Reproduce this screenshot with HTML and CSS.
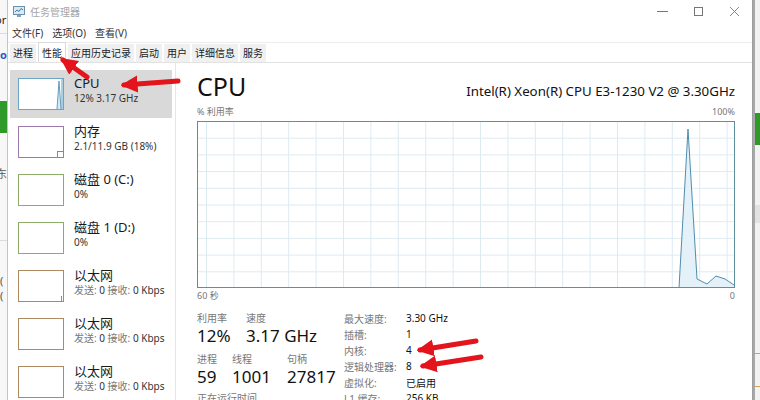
FILE: index.html
```html
<!DOCTYPE html>
<html>
<head>
    <title>任务管理器</title>
    <link rel="stylesheet" href="styles.css">
</head>
<body>
    <div class="desk">
        <div class="edge edge-left">
            <div class="frag frag-or">or</div>
            <div class="frag-line"></div>
            <div class="frag frag-blue">o</div>
            <div class="frag-green"></div>
            <div class="frag frag-gray">东</div>
            <div class="frag-line frag-line-low"></div>
            <div class="frag frag-paren">(</div>
            <div class="frag frag-paren2">(</div>
        </div>

        <div class="window">
            <div class="titlebar">
                <svg class="app-icon" width="12" height="11" viewBox="0 0 12 11">
                    <rect x="0.5" y="0.5" width="11" height="8" fill="#dbe9f3" stroke="#6d8fa8"/>
                    <polyline points="2,6 4,4 6,5.5 8,2.5 10,4" fill="none" stroke="#3d7fb0" stroke-width="1"/>
                    <rect x="4" y="9" width="4" height="2" fill="#8aa3b8"/>
                </svg>
                <span class="title">任务管理器</span>
                <div class="win-controls">
                    <div class="win-btn">
                        <svg width="11" height="11" viewBox="0 0 11 11"><line x1="0" y1="5.5" x2="11" y2="5.5" stroke="#777" stroke-width="1"/></svg>
                    </div>
                    <div class="win-btn">
                        <svg width="11" height="11" viewBox="0 0 11 11"><rect x="1.5" y="1.5" width="8" height="8" fill="none" stroke="#777" stroke-width="1"/></svg>
                    </div>
                    <div class="win-btn">
                        <svg width="11" height="11" viewBox="0 0 11 11"><path d="M1 1 L10 10 M10 1 L1 10" stroke="#888" stroke-width="1"/></svg>
                    </div>
                </div>
            </div>

            <div class="menubar">
                <span>文件(F)</span>
                <span>选项(O)</span>
                <span>查看(V)</span>
            </div>

            <div class="tabs">
                <span class="tab">进程</span>
                <span class="tab tab-active">性能</span>
                <span class="tab">应用历史记录</span>
                <span class="tab">启动</span>
                <span class="tab">用户</span>
                <span class="tab">详细信息</span>
                <span class="tab">服务</span>
            </div>

            <div class="content">
                <div class="sidebar">
                    <div class="res res-active">
                        <div class="thumb thumb-cpu">
                            <svg width="44" height="30" viewBox="0 0 44 30">
                                <polygon points="38,30 40,2 42,30" fill="#d6eaf5"/>
                                <polyline points="38,30 40,2 42,30" fill="none" stroke="#5d9dc0" stroke-width="1"/>
                                <line x1="43" y1="0" x2="43" y2="30" stroke="#5d9dc0" stroke-width="1"/>
                            </svg>
                        </div>
                        <div class="res-text">
                            <div class="res-name">CPU</div>
                            <div class="res-sub">12% 3.17 GHz</div>
                        </div>
                    </div>
                    <div class="res">
                        <div class="thumb thumb-mem"><span class="mem-fill"></span></div>
                        <div class="res-text">
                            <div class="res-name">内存</div>
                            <div class="res-sub">2.1/11.9 GB (18%)</div>
                        </div>
                    </div>
                    <div class="res">
                        <div class="thumb thumb-disk"></div>
                        <div class="res-text">
                            <div class="res-name">磁盘 0 (C:)</div>
                            <div class="res-sub">0%</div>
                        </div>
                    </div>
                    <div class="res">
                        <div class="thumb thumb-disk"></div>
                        <div class="res-text">
                            <div class="res-name">磁盘 1 (D:)</div>
                            <div class="res-sub">0%</div>
                        </div>
                    </div>
                    <div class="res">
                        <div class="thumb thumb-net"><span class="net-tick"></span></div>
                        <div class="res-text">
                            <div class="res-name">以太网</div>
                            <div class="res-sub"><span class="muted">发送:</span> 0 <span class="muted">接收:</span> 0 Kbps</div>
                        </div>
                    </div>
                    <div class="res">
                        <div class="thumb thumb-net"></div>
                        <div class="res-text">
                            <div class="res-name">以太网</div>
                            <div class="res-sub"><span class="muted">发送:</span> 0 <span class="muted">接收:</span> 0 Kbps</div>
                        </div>
                    </div>
                    <div class="res">
                        <div class="thumb thumb-net"></div>
                        <div class="res-text">
                            <div class="res-name">以太网</div>
                            <div class="res-sub"><span class="muted">发送:</span> 0 <span class="muted">接收:</span> 0 Kbps</div>
                        </div>
                    </div>
                </div>

                <div class="main">
                    <div class="perf-head">
                        <h1 class="perf-title">CPU</h1>
                        <div class="perf-model">Intel(R) Xeon(R) CPU E3-1230 V2 @ 3.30GHz</div>
                    </div>
                    <div class="axis"><span>% 利用率</span><span>100%</span></div>
                    <svg class="graph" width="538" height="167" viewBox="0 0 538 167">
                        <defs>
                            <pattern id="grid" x="9" y="0" width="27.4" height="16.7" patternUnits="userSpaceOnUse">
                                <path d="M0.5 0 V16.7 M0 0.5 H27.4" stroke="#dcebf2" stroke-width="1" fill="none"/>
                            </pattern>
                        </defs>
                        <rect x="0" y="0" width="538" height="167" fill="#fff"/>
                        <rect x="0" y="0" width="538" height="167" fill="url(#grid)"/>
                        <polygon points="482,167 491,8 500,158 510,163 519,155 528,158 537,164 537,167" fill="#e4f1f8"/>
                        <polyline points="482,167 491,8 500,158 510,163 519,155 528,158 537,164" fill="none" stroke="#4d8ead" stroke-width="1"/>
                        <rect x="0.5" y="0.5" width="537" height="166" fill="none" stroke="#5e8f9c" stroke-width="1"/>
                    </svg>
                    <div class="axis axis-bottom"><span>60 秒</span><span>0</span></div>

                    <div class="stats">
                        <div class="stats-left">
                            <div class="stat-row">
                                <div class="stat stat-util">
                                    <div class="stat-label">利用率</div>
                                    <div class="stat-value">12%</div>
                                </div>
                                <div class="stat">
                                    <div class="stat-label">速度</div>
                                    <div class="stat-value">3.17 GHz</div>
                                </div>
                            </div>
                            <div class="stat-row stat-row-2">
                                <div class="stat stat-proc">
                                    <div class="stat-label">进程</div>
                                    <div class="stat-value">59</div>
                                </div>
                                <div class="stat stat-thread">
                                    <div class="stat-label">线程</div>
                                    <div class="stat-value">1001</div>
                                </div>
                                <div class="stat">
                                    <div class="stat-label">句柄</div>
                                    <div class="stat-value">27817</div>
                                </div>
                            </div>
                            <div class="stat-label uptime">正在运行时间</div>
                        </div>
                        <div class="stats-right">
                            <span class="spec-label">最大速度:</span><span class="spec-value">3.30 GHz</span>
                            <span class="spec-label">插槽:</span><span class="spec-value">1</span>
                            <span class="spec-label">内核:</span><span class="spec-value">4</span>
                            <span class="spec-label">逻辑处理器:</span><span class="spec-value">8</span>
                            <span class="spec-label">虚拟化:</span><span class="spec-value">已启用</span>
                            <span class="spec-label">L1 缓存:</span><span class="spec-value">256 KB</span>
                        </div>
                    </div>
                </div>
            </div>
        </div>

        <div class="edge edge-right">
            <div class="frag-green frag-green-r"></div>
            <div class="frag-grayblock"></div>
            <div class="frag-orange"></div>
            <div class="frag-orange frag-orange-2"></div>
        </div>
    </div>

    <!-- red annotation arrows drawn over the screenshot -->
    <svg class="arrows" width="760" height="400" viewBox="0 0 760 400">
        <defs>
            <marker id="head" viewBox="0 0 10 10" refX="8" refY="5" markerWidth="3.4" markerHeight="3.6" orient="auto">
                <path d="M0 0 L10 5 L0 10 z" fill="#e3141c"/>
            </marker>
        </defs>
        <g stroke="#e3141c" stroke-width="5" stroke-linecap="round" fill="none">
            <line x1="87" y1="77" x2="63" y2="60" marker-end="url(#head)"/>
            <line x1="178" y1="81" x2="124" y2="85" marker-end="url(#head)"/>
            <line x1="476" y1="341" x2="420" y2="350" marker-end="url(#head)"/>
            <line x1="481" y1="357" x2="423" y2="366" marker-end="url(#head)"/>
        </g>
    </svg>
</body>
</html>
```

FILE: styles.css
```css
* {
    box-sizing: border-box;
}
body {
    margin: 0;
    width: 760px;
    height: 400px;
    overflow: hidden;
    background: #f4f4f4;
    font-family: "Noto Sans", "Noto Sans CJK SC", sans-serif;
    color: #1e1e1e;
}
.desk {
    display: flex;
    height: 400px;
}

/* bits of the desktop peeking out at both sides */
.edge {
    width: 7px;
    flex: none;
    overflow: hidden;
    position: relative;
}
.edge-left {
    background: #f7f7f7;
}
.frag {
    font-size: 11px;
    line-height: 12px;
    white-space: nowrap;
}
.frag-or {
    margin: 14px 0 0 -5px;
    color: #222;
}
.frag-line {
    height: 1px;
    background: #dcdcdc;
    margin-top: 7px;
}
.frag-line-low {
    margin-top: 60px;
}
.frag-blue {
    margin-top: 15px;
    color: #2a56c4;
    font-weight: bold;
}
.frag-green {
    height: 32px;
    margin-top: 40px;
    background: #2f9a2a;
}
.frag-gray {
    margin: 35px 0 0 -4px;
    color: #555;
}
.frag-paren {
    margin-top: 34px;
    color: #555;
}
.frag-paren2 {
    margin-top: 3px;
    color: #555;
}
.edge-right {
    background: #f2f2f2;
    border-left: 2px solid #a8a8a8;
}
.frag-green-r {
    margin-top: 113px;
}
.frag-grayblock {
    height: 18px;
    margin-top: 60px;
    background: #e2e2e2;
}
.frag-orange {
    height: 1px;
    margin-top: 130px;
    background: #d9a24a;
}
.frag-orange-2 {
    margin-top: 32px;
}

/* task manager window */
.window {
    width: 746px;
    flex: none;
    background: #fff;
    border-left: 1px solid #c4c4c4;
    border-right: 1px solid #9e9e9e;
    display: flex;
    flex-direction: column;
}
.titlebar {
    height: 22px;
    display: flex;
    align-items: center;
    padding-left: 5px;
}
.app-icon {
    display: block;
}
.title {
    margin-left: 5px;
    font-size: 10px;
    color: #a5a5a5;
}
.win-controls {
    margin-left: auto;
    display: flex;
}
.win-btn {
    width: 36px;
    height: 22px;
    display: flex;
    align-items: center;
    justify-content: center;
}
.win-btn svg {
    display: block;
}
.menubar {
    height: 20px;
    display: flex;
    align-items: center;
    font-size: 10px;
    color: #333;
}
.menubar span {
    padding: 0 4px;
}
.menubar span + span {
    margin-left: 1px;
}
.tabs {
    height: 21px;
    display: flex;
    gap: 2px;
    padding: 1px 0 0 2px;
    border-top: 1px solid #ececec;
    border-bottom: 1px solid #e2e2e2;
}
.tab {
    padding: 0 3px;
    font-size: 10px;
    line-height: 18px;
    background: #f0f0f0;
    color: #222;
}
.tab-active {
    background: #fff;
    border: 1px solid #dadada;
    border-bottom: none;
    margin-top: -2px;
    line-height: 20px;
}

.content {
    flex: 1;
    display: flex;
    min-height: 0;
}
.sidebar {
    width: 168px;
    flex: none;
    padding: 7px 0 0 2px;
    border-right: 1px solid #e6e6e6;
}
.res {
    width: 162px;
    height: 48px;
    display: flex;
    align-items: flex-start;
    gap: 10px;
    padding: 8px 0 0 8px;
}
.res-active {
    background: #d9d9d9;
}
.thumb {
    width: 46px;
    height: 32px;
    flex: none;
    border: 1px solid #888;
    background: #fff;
    position: relative;
}
.thumb svg {
    display: block;
}
.thumb-cpu {
    border-color: #6aa5c3;
}
.thumb-mem {
    border-color: #9c78ad;
}
.mem-fill {
    position: absolute;
    right: 0;
    bottom: 0;
    width: 6px;
    height: 6px;
    border-left: 1px solid #9c78ad;
    border-top: 1px solid #9c78ad;
}
.thumb-disk {
    border-color: #8dac69;
}
.thumb-net {
    border-color: #ad8a5f;
}
.net-tick {
    position: absolute;
    right: 1px;
    bottom: 0;
    width: 1px;
    height: 5px;
    background: #ad8a5f;
}
.res-text {
    margin-top: -3px;
}
.res-name {
    font-size: 13px;
    line-height: 16px;
    color: #1a1a1a;
}
.res-sub {
    font-size: 10px;
    line-height: 14px;
    color: #333;
}
.muted {
    color: #777;
}

.main {
    flex: 1;
    padding: 8px 17px 0 21px;
}
.perf-head {
    display: flex;
    align-items: baseline;
    justify-content: space-between;
    height: 30px;
}
.perf-title {
    margin: 0;
    font-size: 25px;
    line-height: 30px;
    font-weight: normal;
    color: #111;
}
.perf-model {
    font-size: 13.3px;
    color: #111;
}
.axis {
    display: flex;
    justify-content: space-between;
    font-size: 9px;
    line-height: 12px;
    color: #777;
    margin: 5px 0 3px;
}
.axis-bottom {
    margin: 2px 0 0;
}
.graph {
    display: block;
}
.stats {
    display: flex;
    margin-top: 9px;
}
.stats-left {
    width: 147px;
    flex: none;
}
.stat-row {
    display: flex;
}
.stat-row-2 {
    margin-top: 5px;
}
.stat-util {
    width: 49px;
}
.stat-proc {
    width: 35px;
}
.stat-thread {
    width: 55px;
}
.stat-label {
    font-size: 10px;
    line-height: 14px;
    color: #777;
}
.stat-value {
    font-size: 17px;
    line-height: 22px;
    color: #111;
}
.uptime {
    margin-top: 3px;
}
.stats-right {
    display: grid;
    grid-template-columns: 62px auto;
    grid-auto-rows: 16px;
    align-items: center;
    margin-top: -1px;
    font-size: 10px;
}
.spec-label {
    color: #777;
}
.spec-value {
    color: #111;
}

.arrows {
    position: absolute;
    left: 0;
    top: 0;
    pointer-events: none;
}
```
